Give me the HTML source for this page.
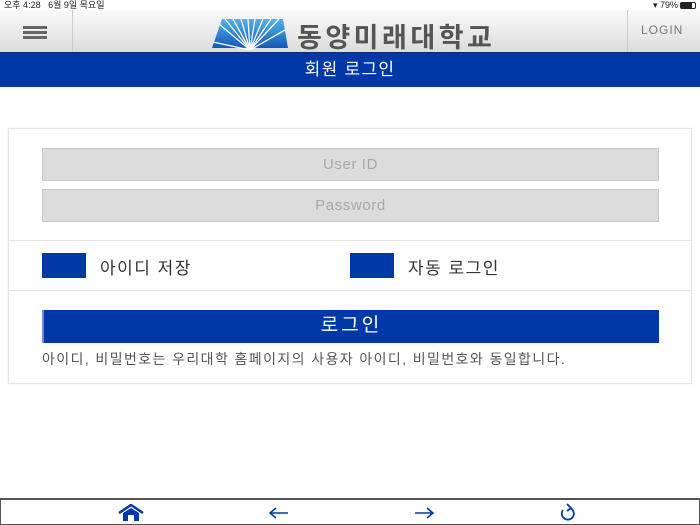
<!DOCTYPE html>
<html><head><meta charset="utf-8">
<style>
*{margin:0;padding:0;box-sizing:border-box}
body{width:700px;height:525px;background:#fff;font-family:"Liberation Sans","Noto Sans CJK KR",sans-serif;position:relative;overflow:hidden}
.status{position:absolute;top:0;left:0;width:700px;height:12px;font-size:9px;line-height:11px;color:#222;background:#fff}
.header{position:absolute;top:10px;left:0;width:700px;height:42px;background:linear-gradient(#fafafa,#dcdcdc)}
.blue{position:absolute;top:52px;left:0;width:700px;height:35px;background:#0038a8;color:#fff;font-size:17px;letter-spacing:1.3px;text-align:center;line-height:33px;border-top:1px solid #0a2a80}
.card{position:absolute;left:8px;top:128px;width:684px;height:256px;border:1px solid #e6e6e6;box-shadow:0 0 2px #eee}
.inp{position:absolute;left:33px;width:617px;height:33px;background:#dcdcdc;border:1px solid #c8c8c8;color:#a8a8a8;font-size:15px;letter-spacing:.6px;text-align:center;line-height:31px}
.hr{position:absolute;left:0;width:682px;height:1px;background:#e6e6e6}
.cb{position:absolute;width:44px;height:25px;background:#0038a8}
.lbl{position:absolute;font-size:17px;letter-spacing:1.5px;color:#333}
.btn{position:absolute;left:33px;top:181px;width:617px;height:33px;background:#0038a8;color:#fff;font-size:19px;letter-spacing:3px;text-align:center;line-height:31px;border-left:2px solid #6b8fd0}
.note{position:absolute;left:33px;top:220px;font-size:14px;color:#555;letter-spacing:1.4px;white-space:nowrap}
.bottom{position:absolute;left:0;top:498px;width:700px;height:27px;border:1px solid #555;border-top:2px solid #555;background:#fff}
</style></head><body>
<div class="status"><span style="position:absolute;left:4px;top:0px">오후 4:28 &nbsp; 6월 9일 목요일</span><span style="position:absolute;right:22px;top:0px">▾ 79%</span><span style="position:absolute;right:4px;top:2px;width:16px;height:7px;border:1px solid #222;border-radius:2px"><span style="display:block;width:11px;height:5px;background:#222"></span></span></div>
<div class="header">
 <div style="position:absolute;left:72px;top:0;width:1px;height:42px;background:#ccc"></div>
 <div style="position:absolute;left:627px;top:0;width:1px;height:42px;background:#ccc"></div>
 <div style="position:absolute;left:23px;top:16px;width:24px;height:3px;background:#666;box-shadow:0 5px 0 #666,0 10px 0 #666"></div>
 <svg style="position:absolute;left:211px;top:8px" width="78" height="32" viewBox="0 0 78 32">
  <defs><linearGradient id="g" x1="0" y1="0" x2="0" y2="1"><stop offset="0" stop-color="#4fb3ea"/><stop offset="1" stop-color="#1558b8"/></linearGradient></defs>
  <polygon points="11,1 72,1 77,30 1,30" fill="url(#g)"/>
  <g stroke="#fff" stroke-width="1.3">
   <line x1="39" y1="32" x2="8" y2="6"/><line x1="39" y1="32" x2="14" y2="1"/><line x1="39" y1="32" x2="22" y2="1"/><line x1="39" y1="32" x2="30" y2="1"/><line x1="39" y1="32" x2="37" y2="1"/><line x1="39" y1="32" x2="44" y2="1"/><line x1="39" y1="32" x2="52" y2="1"/><line x1="39" y1="32" x2="60" y2="1"/><line x1="39" y1="32" x2="68" y2="1"/><line x1="39" y1="32" x2="74" y2="12"/><line x1="39" y1="32" x2="2" y2="24"/>
  </g>
 </svg>
 <div style="position:absolute;left:297px;top:6px;font-size:27px;font-weight:bold;color:#555;letter-spacing:3.5px">동양미래대학교</div>
 <div style="position:absolute;left:641px;top:13px;font-size:12px;letter-spacing:1px;color:#777">LOGIN</div>
</div>
<div class="blue">회원 로그인</div>
<div class="card">
 <div class="inp" style="top:19px">User ID</div>
 <div class="inp" style="top:60px">Password</div>
 <div class="hr" style="top:111px"></div>
 <div class="cb" style="left:33px;top:124px"></div>
 <div class="lbl" style="left:91px;top:125px">아이디 저장</div>
 <div class="cb" style="left:341px;top:124px"></div>
 <div class="lbl" style="left:399px;top:125px">자동 로그인</div>
 <div class="hr" style="top:161px"></div>
 <div class="btn">로그인</div>
 <div class="note">아이디, 비밀번호는 우리대학 홈페이지의 사용자 아이디, 비밀번호와 동일합니다.</div>
</div>
<div class="bottom">
 <svg style="position:absolute;left:117px;top:4px" width="26" height="18" viewBox="0 0 26 18"><path d="M1 9 L13 1 L25 9" stroke="#0038a8" stroke-width="2.5" fill="none"/><path d="M5 9 L13 4 L21 9 V17 H5 Z" fill="#0038a8"/><rect x="10" y="11" width="6" height="6" fill="#fff"/></svg>
 <svg style="position:absolute;left:267px;top:6px" width="22" height="14" viewBox="0 0 22 14"><path d="M20 7 H3 M8 2 L2 7 L8 12" stroke="#0038a8" stroke-width="1.6" fill="none"/></svg>
 <svg style="position:absolute;left:412px;top:6px" width="22" height="14" viewBox="0 0 22 14"><path d="M2 7 H19 M14 2 L20 7 L14 12" stroke="#0038a8" stroke-width="1.6" fill="none"/></svg>
 <svg style="position:absolute;left:557px;top:3px" width="20" height="20" viewBox="0 0 20 20"><path d="M12 5 A6 6 0 1 1 5 7" stroke="#0038a8" stroke-width="1.8" fill="none"/><path d="M9 1 L13 5 L9 8" stroke="#0038a8" stroke-width="1.8" fill="none"/></svg>
</div>
</body></html>
